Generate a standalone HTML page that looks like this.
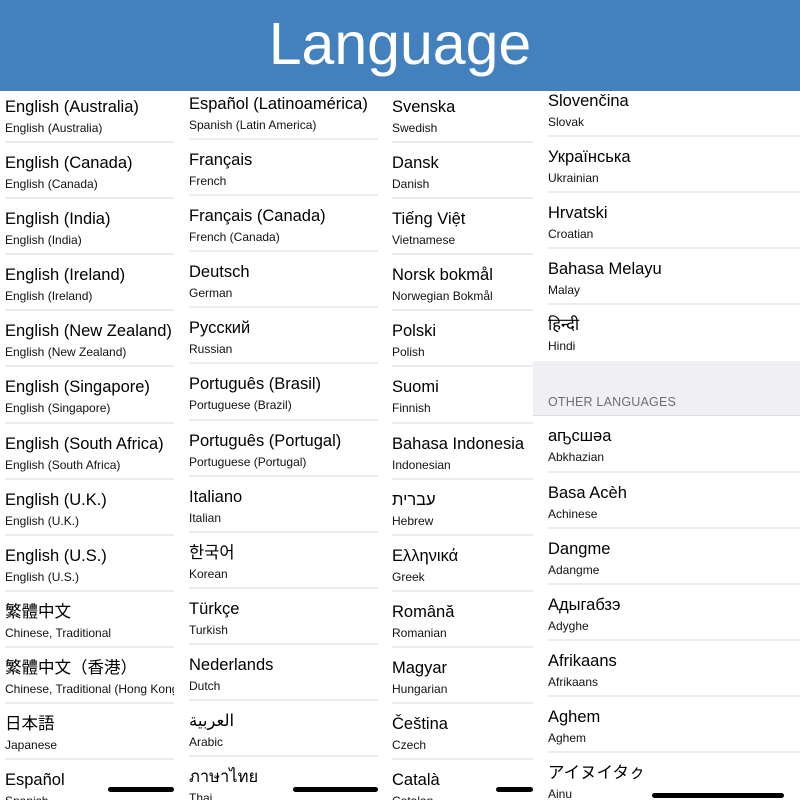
<!DOCTYPE html>
<html><head><meta charset="utf-8"><style>
*{margin:0;padding:0;box-sizing:border-box}
body{width:800px;height:800px;overflow:hidden;background:#fff;position:relative;font-family:"Liberation Sans","Noto Sans CJK JP",sans-serif;color:#000}
.hdr{position:absolute;left:0;top:0;width:800px;height:91px;background:#4281be;z-index:5}
.hdr div{position:absolute;left:0;right:0;top:11px;text-align:center;color:#fff;font-size:59px;line-height:66px}
.col{position:absolute;top:91px;height:709px;overflow:hidden}
.in{position:absolute;left:0;right:0}
.it{height:56.1px;border-bottom:2px solid #ececec;position:relative;margin-left:var(--ml)}
.it .t{position:absolute;left:var(--tl);top:10px;font-size:16.5px;white-space:nowrap;line-height:20px}
.it .s{position:absolute;left:var(--tl);top:33px;font-size:12px;white-space:nowrap;line-height:16px;color:#111}
.gray{height:55px;background:#efeff4;position:relative;border-bottom:1px solid #dcdce0}
.gray span{position:absolute;left:15px;top:34px;font-size:12.5px;color:#6d6d72;letter-spacing:.2px}
.bar{position:absolute;height:5px;border-radius:3px;background:#000;z-index:3}
</style></head><body>
<div class="hdr"><div>Language</div></div>

<div class="col" style="left:0;width:174px;--ml:5px;--tl:0px">
<div class="in" style="top:-4px">
<div class="it"><span class="t">English (Australia)</span><span class="s">English (Australia)</span></div>
<div class="it"><span class="t">English (Canada)</span><span class="s">English (Canada)</span></div>
<div class="it"><span class="t">English (India)</span><span class="s">English (India)</span></div>
<div class="it"><span class="t">English (Ireland)</span><span class="s">English (Ireland)</span></div>
<div class="it"><span class="t">English (New Zealand)</span><span class="s">English (New Zealand)</span></div>
<div class="it"><span class="t">English (Singapore)</span><span class="s">English (Singapore)</span></div>
<div class="it"><span class="t">English (South Africa)</span><span class="s">English (South Africa)</span></div>
<div class="it"><span class="t">English (U.K.)</span><span class="s">English (U.K.)</span></div>
<div class="it"><span class="t">English (U.S.)</span><span class="s">English (U.S.)</span></div>
<div class="it"><span class="t">繁體中文</span><span class="s">Chinese, Traditional</span></div>
<div class="it"><span class="t">繁體中文（香港）</span><span class="s">Chinese, Traditional (Hong Kong)</span></div>
<div class="it"><span class="t">日本語</span><span class="s">Japanese</span></div>
<div class="it"><span class="t">Español</span><span class="s">Spanish</span></div>
</div></div>

<div class="col" style="left:183px;width:195px;--ml:6px;--tl:0px">
<div class="in" style="top:-7px">
<div class="it"><span class="t">Español (Latinoamérica)</span><span class="s">Spanish (Latin America)</span></div>
<div class="it"><span class="t">Français</span><span class="s">French</span></div>
<div class="it"><span class="t">Français (Canada)</span><span class="s">French (Canada)</span></div>
<div class="it"><span class="t">Deutsch</span><span class="s">German</span></div>
<div class="it"><span class="t">Русский</span><span class="s">Russian</span></div>
<div class="it"><span class="t">Português (Brasil)</span><span class="s">Portuguese (Brazil)</span></div>
<div class="it"><span class="t">Português (Portugal)</span><span class="s">Portuguese (Portugal)</span></div>
<div class="it"><span class="t">Italiano</span><span class="s">Italian</span></div>
<div class="it"><span class="t">한국어</span><span class="s">Korean</span></div>
<div class="it"><span class="t">Türkçe</span><span class="s">Turkish</span></div>
<div class="it"><span class="t">Nederlands</span><span class="s">Dutch</span></div>
<div class="it"><span class="t">العربية</span><span class="s">Arabic</span></div>
<div class="it"><span class="t">ภาษาไทย</span><span class="s">Thai</span></div>
</div></div>

<div class="col" style="left:386px;width:147px;--ml:6px;--tl:0px">
<div class="in" style="top:-4px">
<div class="it"><span class="t">Svenska</span><span class="s">Swedish</span></div>
<div class="it"><span class="t">Dansk</span><span class="s">Danish</span></div>
<div class="it"><span class="t">Tiếng Việt</span><span class="s">Vietnamese</span></div>
<div class="it"><span class="t">Norsk bokmål</span><span class="s">Norwegian Bokmål</span></div>
<div class="it"><span class="t">Polski</span><span class="s">Polish</span></div>
<div class="it"><span class="t">Suomi</span><span class="s">Finnish</span></div>
<div class="it"><span class="t">Bahasa Indonesia</span><span class="s">Indonesian</span></div>
<div class="it"><span class="t">עברית</span><span class="s">Hebrew</span></div>
<div class="it"><span class="t">Ελληνικά</span><span class="s">Greek</span></div>
<div class="it"><span class="t">Română</span><span class="s">Romanian</span></div>
<div class="it"><span class="t">Magyar</span><span class="s">Hungarian</span></div>
<div class="it"><span class="t">Čeština</span><span class="s">Czech</span></div>
<div class="it"><span class="t">Català</span><span class="s">Catalan</span></div>
</div></div>

<div class="col" style="left:533px;width:267px;--ml:15px;--tl:0px">
<div class="in" style="top:-10px">
<div class="it"><span class="t">Slovenčina</span><span class="s">Slovak</span></div>
<div class="it"><span class="t">Українська</span><span class="s">Ukrainian</span></div>
<div class="it"><span class="t">Hrvatski</span><span class="s">Croatian</span></div>
<div class="it"><span class="t">Bahasa Melayu</span><span class="s">Malay</span></div>
<div class="it" style="margin-left:0;border-bottom:none"><span class="t" style="left:15px">हिन्दी</span><span class="s" style="left:15px">Hindi</span></div>
<div class="gray"><span>OTHER LANGUAGES</span></div>
<div class="it"><span class="t">аҧсшәа</span><span class="s">Abkhazian</span></div>
<div class="it"><span class="t">Basa Acèh</span><span class="s">Achinese</span></div>
<div class="it"><span class="t">Dangme</span><span class="s">Adangme</span></div>
<div class="it"><span class="t">Адыгабзэ</span><span class="s">Adyghe</span></div>
<div class="it"><span class="t">Afrikaans</span><span class="s">Afrikaans</span></div>
<div class="it"><span class="t">Aghem</span><span class="s">Aghem</span></div>
<div class="it"><span class="t">アイヌイタㇰ</span><span class="s">Ainu</span></div>
</div></div>

<div class="bar" style="left:108px;top:787px;width:66px"></div>
<div class="bar" style="left:293px;top:787px;width:85px"></div>
<div class="bar" style="left:496px;top:787px;width:37px"></div>
<div class="bar" style="left:652px;top:793px;width:132px"></div>
</body></html>
